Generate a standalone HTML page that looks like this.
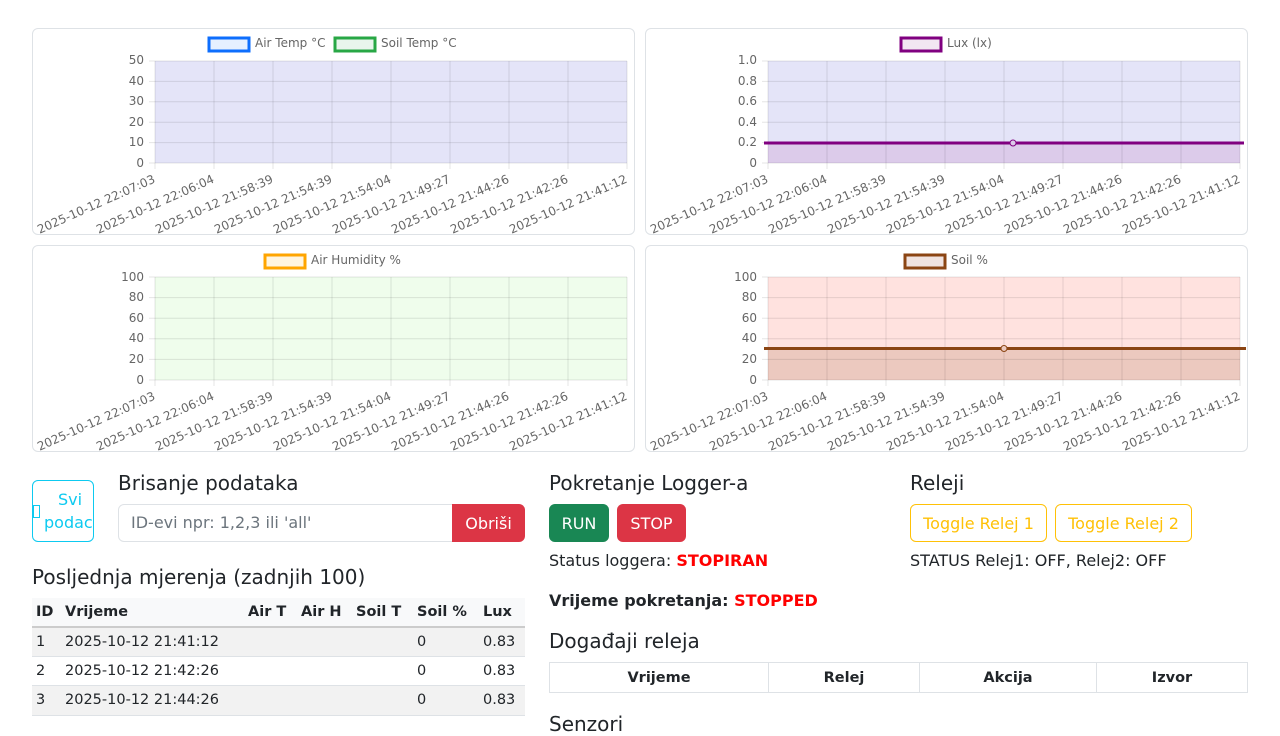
<!DOCTYPE html>
<html><head><meta charset="utf-8">
<style>
*{box-sizing:border-box;margin:0;padding:0}
body{width:1280px;height:720px;overflow:hidden;background:#fff;font-family:"DejaVu Sans","Liberation Sans",sans-serif;color:#212529;font-size:16px;position:relative}
.card{position:absolute;width:603px;height:207px;border:1px solid #dee2e6;border-radius:6px;background:#fff}
.card svg{position:absolute;left:-1px;top:-1px}
.abs{position:absolute;white-space:nowrap}
h5{font-weight:400;font-size:20px;position:absolute;white-space:nowrap}
.btn{position:absolute;border-radius:6px;display:flex;align-items:center;justify-content:center;font-size:16px}
table{border-collapse:collapse;position:absolute}
</style></head><body>

<!-- chart 1 -->
<div class="card" style="left:32px;top:28px">
<svg width="603" height="207" font-family="DejaVu Sans, sans-serif" font-size="12" fill="#666">
<rect x="177" y="10" width="40" height="13" fill="#e6f0ff" stroke="#0d6efd" stroke-width="3"/>
<text x="223" y="19">Air Temp °C</text>
<rect x="303" y="10" width="40" height="13" fill="#e8f5ec" stroke="#28a745" stroke-width="3"/>
<text x="349" y="19">Soil Temp °C</text>
<rect x="123" y="33" width="472" height="102" fill="#e4e4f8"/>
<g stroke="#000" stroke-opacity="0.1">
<path d="M117 33H595M117 53.4H595M117 73.8H595M117 94.2H595M117 114.6H595M117 135H595"/>
<path d="M123 33V141M182 33V141M241 33V141M300 33V141M359 33V141M418 33V141M477 33V141M536 33V141M595 33V141"/>
</g>
<g text-anchor="end"><text x="112" y="36">50</text><text x="112" y="57">40</text><text x="112" y="77">30</text><text x="112" y="98">20</text><text x="112" y="118">10</text><text x="112" y="139">0</text></g>
<g text-anchor="end">
<text transform="translate(124,154) rotate(-24)">2025-10-12 22:07:03</text>
<text transform="translate(183,154) rotate(-24)">2025-10-12 22:06:04</text>
<text transform="translate(242,154) rotate(-24)">2025-10-12 21:58:39</text>
<text transform="translate(301,154) rotate(-24)">2025-10-12 21:54:39</text>
<text transform="translate(360,154) rotate(-24)">2025-10-12 21:54:04</text>
<text transform="translate(419,154) rotate(-24)">2025-10-12 21:49:27</text>
<text transform="translate(478,154) rotate(-24)">2025-10-12 21:44:26</text>
<text transform="translate(537,154) rotate(-24)">2025-10-12 21:42:26</text>
<text transform="translate(596,154) rotate(-24)">2025-10-12 21:41:12</text>
</g></svg></div>

<!-- chart 2 Lux -->
<div class="card" style="left:645px;top:28px">
<svg width="603" height="207" font-family="DejaVu Sans, sans-serif" font-size="12" fill="#666">
<rect x="256" y="10" width="40" height="13" fill="#f2e6f2" stroke="#800080" stroke-width="3"/>
<text x="302" y="19">Lux (lx)</text>
<rect x="123" y="33" width="472" height="82" fill="#e4e4f8"/>
<rect x="123" y="115" width="472" height="20" fill="#dccbea"/>
<g stroke="#000" stroke-opacity="0.1">
<path d="M117 33H595M117 53.4H595M117 73.8H595M117 94.2H595M117 114.6H595M117 135H595"/>
<path d="M123 33V141M182 33V141M241 33V141M300 33V141M359 33V141M418 33V141M477 33V141M536 33V141M595 33V141"/>
</g>
<path d="M119 115H599" stroke="#800080" stroke-width="3"/>
<circle cx="368" cy="115" r="3" fill="#dccbea" stroke="#800080"/>
<g text-anchor="end"><text x="112" y="36">1.0</text><text x="112" y="57">0.8</text><text x="112" y="77">0.6</text><text x="112" y="98">0.4</text><text x="112" y="118">0.2</text><text x="112" y="139">0</text></g>
<g text-anchor="end">
<text transform="translate(124,154) rotate(-24)">2025-10-12 22:07:03</text>
<text transform="translate(183,154) rotate(-24)">2025-10-12 22:06:04</text>
<text transform="translate(242,154) rotate(-24)">2025-10-12 21:58:39</text>
<text transform="translate(301,154) rotate(-24)">2025-10-12 21:54:39</text>
<text transform="translate(360,154) rotate(-24)">2025-10-12 21:54:04</text>
<text transform="translate(419,154) rotate(-24)">2025-10-12 21:49:27</text>
<text transform="translate(478,154) rotate(-24)">2025-10-12 21:44:26</text>
<text transform="translate(537,154) rotate(-24)">2025-10-12 21:42:26</text>
<text transform="translate(596,154) rotate(-24)">2025-10-12 21:41:12</text>
</g></svg></div>

<!-- chart 3 Humidity -->
<div class="card" style="left:32px;top:245px">
<svg width="603" height="207" font-family="DejaVu Sans, sans-serif" font-size="12" fill="#666">
<rect x="233" y="10" width="40" height="13" fill="#fff5e0" stroke="#ffa500" stroke-width="3"/>
<text x="279" y="19">Air Humidity %</text>
<rect x="123" y="32" width="472" height="103" fill="#effdec"/>
<g stroke="#000" stroke-opacity="0.1">
<path d="M117 32H595M117 52.6H595M117 73.2H595M117 93.8H595M117 114.4H595M117 135H595"/>
<path d="M123 32V141M182 32V141M241 32V141M300 32V141M359 32V141M418 32V141M477 32V141M536 32V141M595 32V141"/>
</g>
<g text-anchor="end"><text x="112" y="36">100</text><text x="112" y="56">80</text><text x="112" y="77">60</text><text x="112" y="97">40</text><text x="112" y="118">20</text><text x="112" y="139">0</text></g>
<g text-anchor="end">
<text transform="translate(124,154) rotate(-24)">2025-10-12 22:07:03</text>
<text transform="translate(183,154) rotate(-24)">2025-10-12 22:06:04</text>
<text transform="translate(242,154) rotate(-24)">2025-10-12 21:58:39</text>
<text transform="translate(301,154) rotate(-24)">2025-10-12 21:54:39</text>
<text transform="translate(360,154) rotate(-24)">2025-10-12 21:54:04</text>
<text transform="translate(419,154) rotate(-24)">2025-10-12 21:49:27</text>
<text transform="translate(478,154) rotate(-24)">2025-10-12 21:44:26</text>
<text transform="translate(537,154) rotate(-24)">2025-10-12 21:42:26</text>
<text transform="translate(596,154) rotate(-24)">2025-10-12 21:41:12</text>
</g></svg></div>

<!-- chart 4 Soil -->
<div class="card" style="left:645px;top:245px">
<svg width="603" height="207" font-family="DejaVu Sans, sans-serif" font-size="12" fill="#666">
<rect x="260" y="10" width="40" height="13" fill="#f0e3e0" stroke="#8b4513" stroke-width="3"/>
<text x="306" y="19">Soil %</text>
<rect x="123" y="32" width="472" height="71" fill="#ffe2df"/>
<rect x="123" y="103" width="472" height="32" fill="#ecc9bf"/>
<g stroke="#000" stroke-opacity="0.1">
<path d="M117 32H595M117 52.6H595M117 73.2H595M117 93.8H595M117 114.4H595M117 135H595"/>
<path d="M123 32V141M182 32V141M241 32V141M300 32V141M359 32V141M418 32V141M477 32V141M536 32V141M595 32V141"/>
</g>
<path d="M119 103.5H601" stroke="#8b4513" stroke-width="3"/>
<circle cx="359" cy="103.5" r="3" fill="#ecc9bf" stroke="#8b4513"/>
<g text-anchor="end"><text x="112" y="36">100</text><text x="112" y="56">80</text><text x="112" y="77">60</text><text x="112" y="97">40</text><text x="112" y="118">20</text><text x="112" y="139">0</text></g>
<g text-anchor="end">
<text transform="translate(124,154) rotate(-24)">2025-10-12 22:07:03</text>
<text transform="translate(183,154) rotate(-24)">2025-10-12 22:06:04</text>
<text transform="translate(242,154) rotate(-24)">2025-10-12 21:58:39</text>
<text transform="translate(301,154) rotate(-24)">2025-10-12 21:54:39</text>
<text transform="translate(360,154) rotate(-24)">2025-10-12 21:54:04</text>
<text transform="translate(419,154) rotate(-24)">2025-10-12 21:49:27</text>
<text transform="translate(478,154) rotate(-24)">2025-10-12 21:44:26</text>
<text transform="translate(537,154) rotate(-24)">2025-10-12 21:42:26</text>
<text transform="translate(596,154) rotate(-24)">2025-10-12 21:41:12</text>
</g></svg></div>

<!-- left bottom -->
<div class="abs" style="left:32px;top:480px;width:62px;height:62px;border:1px solid #0dcaf0;border-radius:6px;color:#0dcaf0;overflow:hidden">
<div style="position:absolute;left:0;top:24px;width:7px;height:13px;border:1px solid #0dcaf0"></div>
<div style="position:absolute;left:25px;top:8px;line-height:22px">Svi</div>
<div style="position:absolute;left:11px;top:31px;line-height:22px">podaci</div>
</div>
<h5 style="left:118px;top:471px">Brisanje podataka</h5>
<div class="abs" style="left:118px;top:504px;width:340px;height:38px;border:1px solid #dee2e6;border-radius:6px 0 0 6px;color:#6c757d;padding:7px 12px;line-height:22px">ID-evi npr: 1,2,3 ili 'all'</div>
<div class="btn" style="left:452px;top:504px;width:73px;height:38px;background:#dc3545;color:#fff;border-radius:0 6px 6px 0">Obriši</div>

<h5 style="left:32px;top:565px">Posljednja mjerenja (zadnjih 100)</h5>
<table style="left:32px;top:598px;width:493px;font-size:14.5px">
<tr style="background:#f8f9fa;height:29px;font-weight:bold;border-bottom:2px solid #ccc"><td style="padding-left:4px;width:33px">ID</td><td style="width:183px">Vrijeme</td><td style="width:53px">Air T</td><td style="width:55px">Air H</td><td style="width:61px">Soil T</td><td style="width:66px">Soil %</td><td>Lux</td></tr>
<tr style="background:#f2f2f2;height:29px;border-bottom:1px solid #dee2e6"><td style="padding-left:4px">1</td><td>2025-10-12 21:41:12</td><td></td><td></td><td></td><td>0</td><td>0.83</td></tr>
<tr style="height:29px;border-bottom:1px solid #dee2e6"><td style="padding-left:4px">2</td><td>2025-10-12 21:42:26</td><td></td><td></td><td></td><td>0</td><td>0.83</td></tr>
<tr style="background:#f2f2f2;height:30px;border-bottom:1px solid #dee2e6"><td style="padding-left:4px">3</td><td>2025-10-12 21:44:26</td><td></td><td></td><td></td><td>0</td><td>0.83</td></tr>
</table>

<!-- right bottom -->
<h5 style="left:549px;top:471px">Pokretanje Logger-a</h5>
<div class="btn" style="left:549px;top:504px;width:60px;height:38px;background:#198754;color:#fff">RUN</div>
<div class="btn" style="left:617px;top:504px;width:69px;height:38px;background:#dc3545;color:#fff">STOP</div>
<div class="abs" style="left:549px;top:551px">Status loggera: <b style="color:#f00">STOPIRAN</b></div>
<div class="abs" style="left:549px;top:591px;font-weight:bold">Vrijeme pokretanja: <span style="color:#f00">STOPPED</span></div>
<h5 style="left:549px;top:629px">Događaji releja</h5>
<table style="left:549px;top:662px;width:699px;font-size:14.5px;font-weight:bold;text-align:center">
<tr style="height:30px"><td style="border:1px solid #dee2e6;width:219px">Vrijeme</td><td style="border:1px solid #dee2e6;width:151px">Relej</td><td style="border:1px solid #dee2e6;width:177px">Akcija</td><td style="border:1px solid #dee2e6">Izvor</td></tr>
</table>
<h5 style="left:549px;top:712px">Senzori</h5>

<h5 style="left:910px;top:471px">Releji</h5>
<div class="btn" style="left:910px;top:504px;width:137px;height:38px;border:1px solid #ffc107;color:#ffc107">Toggle Relej 1</div>
<div class="btn" style="left:1055px;top:504px;width:137px;height:38px;border:1px solid #ffc107;color:#ffc107">Toggle Relej 2</div>
<div class="abs" style="left:910px;top:551px">STATUS Relej1: OFF, Relej2: OFF</div>
</body></html>
